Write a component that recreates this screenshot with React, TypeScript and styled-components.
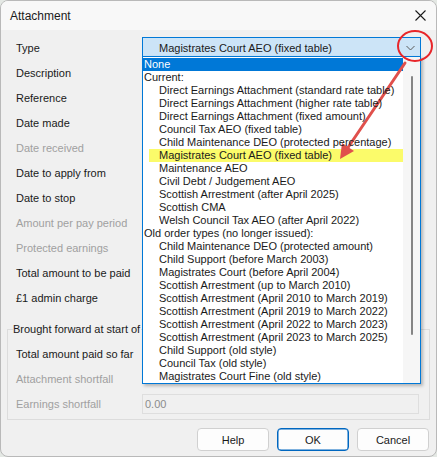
import React from 'react';
import styled, { createGlobalStyle } from 'styled-components';

const FONT = `"Liberation Sans", Arial, sans-serif`;

const GlobalStyle = createGlobalStyle`
  body {
    margin: 0;
    background: #e4e8e4;
    font-family: ${FONT};
  }
`;

const Window = styled.div`
  position: relative;
  width: 437px;
  height: 457px;
  box-sizing: border-box;
  border: 1px solid #b9b9b9;
  border-radius: 8px;
  overflow: hidden;
  background: #f0f0f0;
  font-family: ${FONT};
  font-size: 11px;
  color: #1a1a1a;
`;

const TitleBar = styled.div`
  height: 29px;
  display: flex;
  align-items: center;
  justify-content: space-between;
  padding: 0 10px 0 9px;
  background: #f8f8f8;
  font-size: 12px;
`;

const CloseIcon = styled.svg`
  width: 11px;
  height: 11px;
`;

const Body = styled.div`
  padding: 5px 0 0 0;
`;

const Row = styled.div`
  height: 25px;
  display: flex;
  align-items: center;
  padding-left: 15px;
`;

const Label = styled.div<{ $disabled?: boolean }>`
  width: 126px;
  flex: none;
  color: ${(p) => (p.$disabled ? '#a0a0a0' : '#1a1a1a')};
  white-space: nowrap;
`;

const Field = styled.div<{ $disabled?: boolean }>`
  width: 277px;
  height: 20px;
  box-sizing: border-box;
  border: 1px solid ${(p) => (p.$disabled ? '#dedede' : '#8f8f8f')};
  background: ${(p) => (p.$disabled ? '#f0f0f0' : '#ffffff')};
  color: ${(p) => (p.$disabled ? '#8c8c8c' : '#1a1a1a')};
  display: flex;
  align-items: center;
  padding-left: 2px;
`;

const Combo = styled.div`
  width: 279px;
  height: 21px;
  box-sizing: border-box;
  border: 1px solid #0078d7;
  background: #cce4f7;
  display: flex;
  align-items: center;
  justify-content: space-between;
  padding: 0 5px 0 16px;
`;

const Chevron = styled.svg`
  width: 9px;
  height: 6px;
`;

const GroupBox = styled.fieldset`
  margin: 12px 6px 0 6px;
  padding: 5px 0 3px 0;
  border: 1px solid #dcdcdc;
  border-radius: 0;
`;

const Legend = styled.legend`
  padding: 0;
  margin-left: 5px;
  max-width: 128px;
  overflow: hidden;
  white-space: nowrap;
  line-height: 14px;
`;

const GroupRow = styled(Row)`
  padding-left: 8px;
`;

const Buttons = styled.div`
  display: flex;
  justify-content: flex-end;
  gap: 8px;
  padding: 8px 7px 0 0;
`;

const Button = styled.button<{ $default?: boolean }>`
  width: 72px;
  height: 23px;
  box-sizing: border-box;
  font-family: ${FONT};
  font-size: 11px;
  color: #1a1a1a;
  background: #fdfdfd;
  border: 1px solid ${(p) => (p.$default ? '#0067c0' : '#d0d0d0')};
  box-shadow: ${(p) => (p.$default ? 'inset 0 0 0 0.5px #0067c0' : 'none')};
  border-radius: 4px;
  padding: 0;
`;

const DropList = styled.div`
  position: absolute;
  left: 141px;
  top: 55px;
  width: 279px;
  height: 328px;
  box-sizing: border-box;
  border: 1px solid #0078d7;
  background: #ffffff;
  box-shadow: 2px 2px 3px rgba(0, 0, 0, 0.25);
  display: flex;
`;

const Items = styled.div`
  flex: 1;
  padding-top: 1px;
`;

const Item = styled.div<{ $indent?: boolean; $selected?: boolean; $marked?: boolean }>`
  position: relative;
  height: 13px;
  line-height: 13px;
  padding-left: ${(p) => (p.$indent ? '16px' : '1px')};
  white-space: nowrap;
  color: ${(p) => (p.$selected ? '#ffffff' : '#1a1a1a')};
  background: ${(p) => (p.$selected ? '#0078d7' : 'transparent')};

  &::before {
    content: '';
    display: ${(p) => (p.$marked ? 'block' : 'none')};
    position: absolute;
    left: 6px;
    right: 0;
    top: 0;
    bottom: 0;
    background: #fbfb6a;
    z-index: 0;
  }
`;

const ItemText = styled.span`
  position: relative;
  z-index: 1;
`;

const ScrollTrack = styled.div`
  width: 17px;
  flex: none;
  background: #f6f6f6;
  display: flex;
  justify-content: center;
  padding-top: 19px;
  box-sizing: border-box;
`;

const Thumb = styled.div`
  width: 2px;
  height: 259px;
  background: #858585;
  border-radius: 1px;
  margin-left: 1px;
`;

const Annotation = styled.svg`
  position: absolute;
  left: 0;
  top: 0;
  width: 437px;
  height: 457px;
  pointer-events: none;
`;

const rows: { label: string; disabled?: boolean }[] = [
  { label: 'Description' },
  { label: 'Reference' },
  { label: 'Date made' },
  { label: 'Date received', disabled: true },
  { label: 'Date to apply from' },
  { label: 'Date to stop' },
  { label: 'Amount per pay period', disabled: true },
  { label: 'Protected earnings', disabled: true },
  { label: 'Total amount to be paid' },
  { label: '£1 admin charge' },
];

const items: { text: string; indent?: boolean; selected?: boolean; marked?: boolean }[] = [
  { text: 'None', selected: true },
  { text: 'Current:' },
  { text: 'Direct Earnings Attachment (standard rate table)', indent: true },
  { text: 'Direct Earnings Attachment (higher rate table)', indent: true },
  { text: 'Direct Earnings Attachment (fixed amount)', indent: true },
  { text: 'Council Tax AEO (fixed table)', indent: true },
  { text: 'Child Maintenance DEO (protected percentage)', indent: true },
  { text: 'Magistrates Court AEO (fixed table)', indent: true, marked: true },
  { text: 'Maintenance AEO', indent: true },
  { text: 'Civil Debt / Judgement AEO', indent: true },
  { text: 'Scottish Arrestment (after April 2025)', indent: true },
  { text: 'Scottish CMA', indent: true },
  { text: 'Welsh Council Tax AEO (after April 2022)', indent: true },
  { text: 'Old order types (no longer issued):' },
  { text: 'Child Maintenance DEO (protected amount)', indent: true },
  { text: 'Child Support (before March 2003)', indent: true },
  { text: 'Magistrates Court (before April 2004)', indent: true },
  { text: 'Scottish Arrestment (up to March 2010)', indent: true },
  { text: 'Scottish Arrestment (April 2010 to March 2019)', indent: true },
  { text: 'Scottish Arrestment (April 2019 to March 2022)', indent: true },
  { text: 'Scottish Arrestment (April 2022 to March 2023)', indent: true },
  { text: 'Scottish Arrestment (April 2023 to March 2025)', indent: true },
  { text: 'Child Support (old style)', indent: true },
  { text: 'Council Tax (old style)', indent: true },
  { text: 'Magistrates Court Fine (old style)', indent: true },
];

const App: React.FC = () => {
  return (
    <>
      <GlobalStyle />
      <Window>
        <TitleBar>
          <span>Attachment</span>
          <CloseIcon viewBox="0 0 11 11">
            <path d="M0.5 0.5 L10.5 10.5 M10.5 0.5 L0.5 10.5" stroke="#1a1a1a" strokeWidth="1.1" />
          </CloseIcon>
        </TitleBar>
        <Body>
          <Row>
            <Label>Type</Label>
            <Combo>
              <span>Magistrates Court AEO (fixed table)</span>
              <Chevron viewBox="0 0 9 6">
                <path d="M0.5 1 L4.5 5 L8.5 1" fill="none" stroke="#5a5a5a" strokeWidth="1" />
              </Chevron>
            </Combo>
          </Row>
          {rows.map((r) => (
            <Row key={r.label}>
              <Label $disabled={r.disabled}>{r.label}</Label>
              <Field $disabled={r.disabled} />
            </Row>
          ))}
          <GroupBox>
            <Legend>Brought forward at start of year</Legend>
            <GroupRow>
              <Label>Total amount paid so far</Label>
              <Field />
            </GroupRow>
            <GroupRow>
              <Label $disabled>Attachment shortfall</Label>
            </GroupRow>
            <GroupRow>
              <Label $disabled>Earnings shortfall</Label>
              <Field $disabled>0.00</Field>
            </GroupRow>
          </GroupBox>
          <Buttons>
            <Button>Help</Button>
            <Button $default>OK</Button>
            <Button>Cancel</Button>
          </Buttons>
        </Body>

        <DropList>
          <Items>
            {items.map((it) => (
              <Item key={it.text} $indent={it.indent} $selected={it.selected} $marked={it.marked}>
                <ItemText>{it.text}</ItemText>
              </Item>
            ))}
          </Items>
          <ScrollTrack>
            <Thumb />
          </ScrollTrack>
        </DropList>

        <Annotation viewBox="0 0 437 457">
          <ellipse cx="414" cy="45" rx="17" ry="15" fill="none" stroke="#e8262a" strokeWidth="2" />
          <line x1="404" y1="62" x2="346" y2="148" stroke="#e0504c" strokeWidth="3" strokeLinecap="round" />
          <polygon points="339,158 341,142 353,150" fill="#e0504c" />
        </Annotation>
      </Window>
    </>
  );
};

export default App;
